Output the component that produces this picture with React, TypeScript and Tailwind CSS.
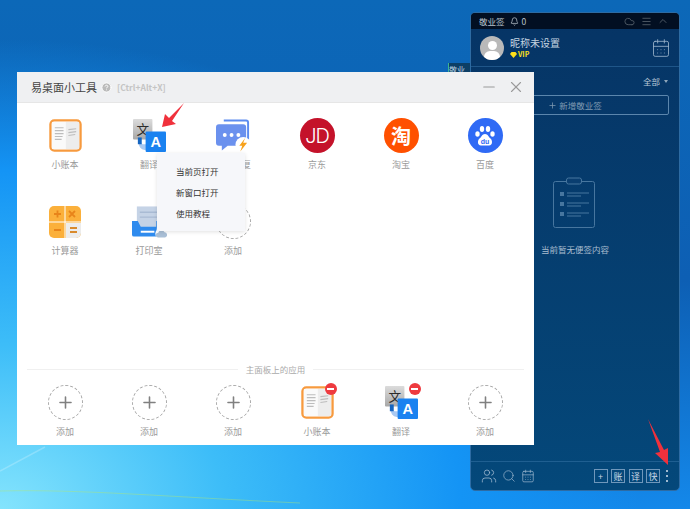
import React from 'react';
import { Bell, ChevronUp, Cloud, Menu, Minus, Plus, Search, Users, X, CalendarDays, CircleHelp } from 'lucide-react';

const FONT = '"Microsoft YaHei", "Noto Sans CJK SC", "Noto Sans", sans-serif';

function BookIcon() {
  return (
    <svg width="33" height="33" viewBox="0 0 34 34">
      <rect x="1.5" y="1.5" width="31" height="31" rx="4" fill="#fff" stroke="#f79a3e" strokeWidth="2.4" />
      <rect x="17" y="3" width="14" height="28" fill="#ededed" />
      <path d="M3 3h14v28H3z" fill="#fafafa" />
      <path d="M6 9h9M6 12h9M6 15h9M6 18h8M6 21h7M20 11l8-1M20 14l8-1M20 17l7-1" stroke="#bdbdbd" strokeWidth="1.2" />
    </svg>
  );
}

function TranslateIcon() {
  return (
    <svg width="33" height="33" viewBox="0 0 34 34">
      <defs>
        <linearGradient id="grayTile" x1="0" y1="0" x2="0" y2="1">
          <stop offset="0" stopColor="#dcdcdc" />
          <stop offset="1" stopColor="#a8a8a8" />
        </linearGradient>
      </defs>
      <rect x="0" y="0" width="20" height="21" rx="1" fill="url(#grayTile)" />
      <text x="10" y="15" textAnchor="middle" fontSize="13" fill="#2b2b2b" fontFamily={FONT}>文</text>
      <path d="M6 24a7 7 0 0 0 6 8h3v-6h-5z" fill="#a9c9f2" />
      <path d="M5 19h4v7H5z" fill="#1565c0" />
      <rect x="13" y="13" width="21" height="21" rx="1" fill="#1a82f0" />
      <text x="23.5" y="29" textAnchor="middle" fontSize="15" fontWeight="700" fill="#fff" fontFamily="Liberation Sans, sans-serif">A</text>
    </svg>
  );
}

function ChatIcon() {
  return (
    <svg width="36" height="34" viewBox="0 0 36 34">
      <path d="M8 1h23a2 2 0 0 1 2 2v20" fill="none" stroke="#5d8cf0" strokeWidth="2" />
      <path d="M3 5h25a3 3 0 0 1 3 3v16a3 3 0 0 1-3 3H12l-6 5v-5H3a3 3 0 0 1-3-3V8a3 3 0 0 1 3-3z" fill="#6b91ee" />
      <circle cx="9" cy="16" r="2" fill="#fff" />
      <circle cx="16" cy="16" r="2" fill="#fff" />
      <circle cx="23" cy="16" r="2" fill="#fff" />
      <circle cx="28" cy="26" r="8" fill="#fff" />
      <path d="M30 19l-6 8h3l-2 6 7-9h-4z" fill="#f7a11a" />
    </svg>
  );
}

function CalcIcon() {
  return (
    <svg width="34" height="34" viewBox="0 0 34 34">
      <rect x="1" y="1" width="32" height="32" rx="5" fill="#fbb03b" />
      <path d="M18 18h15v10a5 5 0 0 1-5 5H18z" fill="#ececec" />
      <path d="M17 1v32M1 17h32" stroke="#fff" strokeWidth="1" />
      <path d="M6 9h7M9.500 5.500v7M21 6l6 6M27 6l-6 6M6 25h7" stroke="#e8841a" strokeWidth="1.800" />
      <path d="M22 23h7M22 27h7" stroke="#d98a2b" strokeWidth="1.800" />
    </svg>
  );
}

function PrintIcon() {
  return (
    <svg width="36" height="34" viewBox="0 0 36 34">
      <rect x="5" y="1" width="24" height="22" fill="#c5d3e6" />
      <path d="M8 7h18M8 12h18" stroke="#a9bbd4" strokeWidth="1.500" />
      <path d="M0 16h6l3 6h16v10H2a2 2 0 0 1-2-2z" fill="#2f8bee" />
      <path d="M25 16h6v14a2 2 0 0 1-2 2h-4z" fill="#2f8bee" />
      <rect x="9" y="26" width="14" height="2" fill="#fff" />
      <circle cx="30" cy="29" r="6" fill="#fff" />
      <path d="M27 33a2.500 2.500 0 0 1 0-5 3.500 3.500 0 0 1 6.500-.5 2.800 2.800 0 0 1 .5 5.500z" fill="#a9bfd6" />
    </svg>
  );
}

function JdIcon() {
  return (
    <div className="flex h-[35px] w-[35px] items-center justify-center rounded-full bg-[#c4122a] text-[20px] font-light tracking-[-1px] text-white" style={{ fontFamily: 'Inter, sans-serif' }}>
      JD
    </div>
  );
}

function TaobaoIcon() {
  return (
    <div className="flex h-[35px] w-[35px] items-center justify-center rounded-full bg-[#ff5000] text-[20px] font-bold text-white">
      淘
    </div>
  );
}

function BaiduIcon() {
  return (
    <div className="flex h-[35px] w-[35px] items-center justify-center rounded-full bg-[#2f6af5]">
      <svg width="22" height="22" viewBox="0 0 22 22" fill="#fff">
        <ellipse cx="3.500" cy="9" rx="2.200" ry="2.800" />
        <ellipse cx="8" cy="4" rx="2.200" ry="3" />
        <ellipse cx="14" cy="4" rx="2.200" ry="3" />
        <ellipse cx="18.500" cy="9" rx="2.200" ry="2.800" />
        <path d="M11 9c-3 0-3.500 3-5.500 4.500C3.500 15 3 20.500 7 20.500h8c4 0 3.500-5.500 1.500-7C14.500 12 14 9 11 9z" />
        <text x="11" y="18.500" textAnchor="middle" fontSize="7" fontWeight="700" fill="#2f6af5" fontFamily="Liberation Sans, sans-serif">du</text>
      </svg>
    </div>
  );
}

function AddIcon() {
  return (
    <div className="flex h-[35px] w-[35px] items-center justify-center rounded-full border border-dashed border-[#a8a8a8]">
      <Plus size={19} strokeWidth={2} className="text-[#808080]" />
    </div>
  );
}

function RemoveBadge() {
  return (
    <div className="absolute right-[-2px] top-[-2px] flex h-[12px] w-[12px] items-center justify-center rounded-full bg-[#ee3a3f]">
      <div className="h-[2px] w-[7px] bg-white" />
    </div>
  );
}

function Tool({ icon, label, badge }: { icon: React.ReactNode; label: string; badge?: boolean }) {
  return (
    <div className="flex w-[84px] flex-col items-center">
      <div className="relative flex h-[35px] w-[35px] items-center justify-center">
        {icon}
        {badge && <RemoveBadge />}
      </div>
      <div className="mt-[5px] text-[9px] leading-[14px] text-[#9a9a9a]">{label}</div>
    </div>
  );
}

const tools = [
  { icon: <BookIcon />, label: '小账本' },
  { icon: <TranslateIcon />, label: '翻译' },
  { icon: <ChatIcon />, label: '快捷回复' },
  { icon: <JdIcon />, label: '京东' },
  { icon: <TaobaoIcon />, label: '淘宝' },
  { icon: <BaiduIcon />, label: '百度' },
  { icon: <CalcIcon />, label: '计算器' },
  { icon: <PrintIcon />, label: '打印室' },
  { icon: <AddIcon />, label: '添加' },
];

const pinned = [
  { icon: <AddIcon />, label: '添加' },
  { icon: <AddIcon />, label: '添加' },
  { icon: <AddIcon />, label: '添加' },
  { icon: <BookIcon />, label: '小账本', badge: true },
  { icon: <TranslateIcon />, label: '翻译', badge: true },
  { icon: <AddIcon />, label: '添加' },
];

function ToolsWindow() {
  return (
    <div className="absolute left-[17px] top-[72px] flex h-[373px] w-[517px] flex-col bg-white">
      <div className="flex h-[31px] shrink-0 items-center border-b border-[#e6e6e6] bg-[#eff0f2] pl-[14px] pr-[9px]">
        <span className="text-[11px] text-[#444]">易桌面小工具</span>
        <CircleHelp size={11} className="ml-[4px] fill-[#bbb] text-white" />
        <span className="ml-[5px] text-[8.500px] font-bold text-[#c4c4c4]">[Ctrl+Alt+X]</span>
        <Minus size={18} strokeWidth={1.500} className="ml-auto text-[#9a9a9a]" />
        <X size={18} strokeWidth={1.500} className="ml-[9px] text-[#9a9a9a]" />
      </div>
      <div className="flex flex-wrap px-[6px] pt-[15px]">
        {tools.map((t, i) => (
          <div key={i} className="h-[86px]">
            <Tool icon={t.icon} label={t.label} />
          </div>
        ))}
      </div>
      <div className="mt-auto flex items-center gap-[8px] px-[10px]">
        <div className="h-px flex-1 bg-[#f0f0f0]" />
        <span className="text-[8.500px] text-[#aaa]">主面板上的应用</span>
        <div className="h-px flex-1 bg-[#f0f0f0]" />
      </div>
      <div className="flex px-[6px] pb-[6px] pt-[9px]">
        {pinned.map((t, i) => (
          <Tool key={i} icon={t.icon} label={t.label} badge={t.badge} />
        ))}
      </div>
      <div className="absolute left-[140px] top-[81px] flex w-[88px] flex-col gap-[7px] bg-[#f6f7fa] py-[11px] pl-[19px] text-[8.500px] leading-[14px] text-[#333] shadow-[0_1px_4px_rgba(0,0,0,0.12)]">
        <div>当前页打开</div>
        <div>新窗口打开</div>
        <div>使用教程</div>
      </div>
    </div>
  );
}

function BoxKey({ children }: { children: React.ReactNode }) {
  return (
    <div className="flex h-[14px] w-[14px] items-center justify-center border border-[#6f97bb] text-[9px] leading-none text-[#c6d6e4]">
      {children}
    </div>
  );
}

function NotePanel() {
  return (
    <div className="absolute left-[470px] top-[12px] flex h-[479px] w-[210px] flex-col overflow-hidden rounded-[5px] border border-[#2d6ba3] bg-gradient-to-b from-[#063465] to-[#04487a]">
      <div className="flex h-[16px] shrink-0 items-center bg-[#020f22] pl-[8px] pr-[10px] text-[8.500px] text-[#b9c3cc]">
        <span>敬业签</span>
        <Bell size={9} className="ml-[5px]" />
        <span className="ml-[3px]">0</span>
        <Cloud size={11} className="ml-auto text-[#4f5a65]" />
        <Menu size={11} className="ml-[6px] text-[#4f5a65]" />
        <ChevronUp size={12} className="ml-[5px] text-[#4f5a65]" />
      </div>
      <div className="flex h-[38px] shrink-0 items-center border-b border-[#1f5689] pl-[9px] pr-[8px]">
        <div className="relative h-[24px] w-[24px] overflow-hidden rounded-full bg-[#b9b9b9]">
          <div className="absolute left-[7.500px] top-[5px] h-[9px] w-[9px] rounded-full bg-white" />
          <div className="absolute left-[4px] top-[15px] h-[12px] w-[16px] rounded-full bg-white" />
        </div>
        <div className="ml-[6px] flex flex-col">
          <span className="text-[10px] leading-[14px] text-[#c4d3e0]">昵称未设置</span>
          <div className="flex items-center gap-[1px] text-[7px] font-bold leading-[9px] text-[#ffe11a]">
            <svg width="7" height="6" viewBox="0 0 7 6" fill="#ffe11a">
              <path d="M1.500 0h4L7 2 3.500 6 0 2z" />
            </svg>
            VIP
          </div>
        </div>
        <CalendarDays size={20} strokeWidth={1} className="ml-auto text-[#9db6cc]" />
      </div>
      <div className="mt-[7px] flex items-center justify-end pr-[11px] text-[8.500px] leading-[14px] text-[#b9c9d7]">
        全部
        <div className="ml-[4px] h-0 w-0 border-x-[2.500px] border-t-[3px] border-x-transparent border-t-[#8ea6bb]" />
      </div>
      <div className="mx-[10px] mt-[7px] flex h-[20px] shrink-0 items-center justify-center rounded-[2px] border border-[#5b86ad] text-[8.500px] text-[#7f9ab2]">
        <Plus size={9} className="mr-[2px]" />
        新增敬业签
      </div>
      <div className="mt-[62px] flex flex-col items-center">
        <svg width="44" height="52" viewBox="0 0 44 52" fill="none" stroke="#47769f" strokeWidth="1">
          <rect x="0.500" y="4.500" width="41" height="46" rx="2" />
          <rect x="13.500" y="1" width="15" height="6" rx="2" fill="#0a3e70" />
          <path d="M14 16h22M14 19h14M14 26h22M14 29h14M14 36h22M14 39h14" />
          <path d="M7 15h4v4H7zM7 25h4v4H7zM7 35h4v4H7z" fill="#47769f" stroke="none" />
        </svg>
        <div className="mt-[13px] text-[8.500px] leading-[14px] text-[#a9bdcf]">当前暂无便签内容</div>
      </div>
      <div className="mt-auto flex h-[29px] shrink-0 items-center border-t border-[#1f5f91] pl-[10px] pr-[11px] text-[#9fb9d0]">
        <Users size={16} strokeWidth={1.200} />
        <Search size={14} strokeWidth={1.200} className="ml-[5px]" />
        <CalendarDays size={14} strokeWidth={1.200} className="ml-[5px]" />
        <div className="ml-auto flex items-center gap-[3.500px]">
          <BoxKey>+</BoxKey>
          <BoxKey>账</BoxKey>
          <BoxKey>译</BoxKey>
          <BoxKey>快</BoxKey>
        </div>
        <div className="ml-[6px] flex flex-col gap-[3px]">
          <div className="h-[2px] w-[2px] bg-[#9fb9d0]" />
          <div className="h-[2px] w-[2px] bg-[#9fb9d0]" />
          <div className="h-[2px] w-[2px] bg-[#9fb9d0]" />
        </div>
      </div>
    </div>
  );
}

export default function App() {
  return (
    <div
      className="relative h-[509px] w-[690px] overflow-hidden bg-[radial-gradient(ellipse_640px_470px_at_0%_100%,#84e4fd_0%,#3dbdf8_35%,#1494f5_72%,rgba(20,148,245,0)_100%),linear-gradient(180deg,#0c68b8_0%,#0d5fb4_55%,#1488ea_100%)]"
      style={{ fontFamily: FONT }}
    >
      <svg className="absolute left-0 top-0" width="690" height="509" fill="none">
        <path d="M0 471 L45 447" stroke="#ffffff" strokeOpacity="0.22" strokeWidth="1.500" />
        <path d="M0 491 C80 489 170 497 300 503" stroke="#b6e86a" strokeOpacity="0.4" strokeWidth="1" />
      </svg>
      <div className="absolute left-[448px] top-[63px] h-[12px] w-[24px] border-l border-[#3fb58f] bg-[#0c3f66] text-[8px] leading-[14px] text-[#b9d0e0]">敬业</div>
      <NotePanel />
      <ToolsWindow />
      <svg className="absolute left-0 top-0" width="690" height="509" fill="#f0313c">
        <path d="M184 103 L172 121 L176 124 L162 127 L165 114 L169 118 Z" />
        <path d="M648 419 L664 450 L668 448 L668 465 L655 453 L660 452 Z" />
      </svg>
    </div>
  );
}
